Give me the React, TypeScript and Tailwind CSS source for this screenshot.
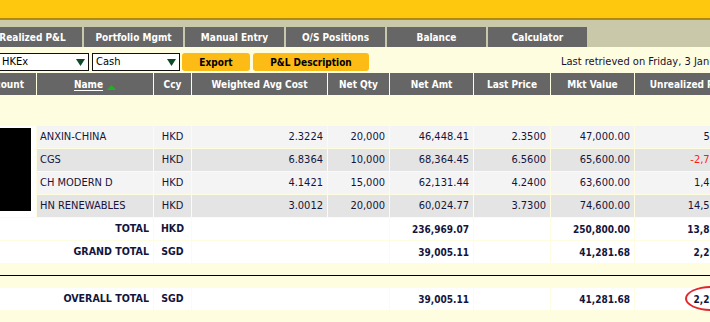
import React from "react";

const COLS =
  "grid grid-cols-[65px_116px_37px_135px_61px_83px_76px_83px_107px] gap-x-px";

const rows = [
  ["ANXIN-CHINA", "HKD", "2.3224", "20,000", "46,448.41", "2.3500", "47,000.00", "551.59"],
  ["CGS", "HKD", "6.8364", "10,000", "68,364.45", "6.5600", "65,600.00", "-2,764.45"],
  ["CH MODERN D", "HKD", "4.1421", "15,000", "62,131.44", "4.2400", "63,600.00", "1,468.56"],
  ["HN RENEWABLES", "HKD", "3.0012", "20,000", "60,024.77", "3.7300", "74,600.00", "14,575.23"],
];

const tabs = ["Realized P&L", "Portfolio Mgmt", "Manual Entry", "O/S Positions", "Balance", "Calculator"];

function Arrow() {
  return (
    <svg width="9" height="7" viewBox="0 0 9 7" className="shrink-0">
      <polygon points="0,0 9,0 4.5,7" fill="#0b4a2a" />
    </svg>
  );
}

function Select({ label, w }: { label: string; w: string }) {
  return (
    <div className={`${w} shrink-0 h-[18px] bg-white border border-[#111] flex items-center pl-[3px] pr-[3px] text-[11px] text-black`}>
      <span className="flex-1">{label}</span>
      <Arrow />
    </div>
  );
}

function TotalRow({ label, ccy, amt, mkt, unr, circle }: { label: string; ccy: string; amt: string; mkt: string; unr: string; circle?: boolean }) {
  const cell = "bg-white h-[22px] flex items-center font-bold text-[#14143c] whitespace-nowrap";
  return (
    <div className={COLS}>
      <div className={`${cell} col-span-2 justify-end pr-[4px] text-[10.6px]`}>{label}</div>
      <div className={`${cell} justify-center text-[10.5px]`}>{ccy}</div>
      <div className={`${cell} col-span-2`}></div>
      <div className={`${cell} justify-end pr-[4px] text-[10px]`}>{amt}</div>
      <div className={cell}></div>
      <div className={`${cell} justify-end pr-[4px] text-[10px]`}>{mkt}</div>
      <div className={`${cell} justify-end pr-[4px] relative text-[10px]`}>
        {unr}
        {circle && (
          <div className="absolute left-[50px] top-[-2px] w-[52px] h-[25px] border-2 border-[#e3262d] rounded-[50%]" />
        )}
      </div>
    </div>
  );
}

export default function App() {
  return (
    <div className="w-[710px] h-[322px] overflow-hidden bg-[#fffde0] font-['DejaVu_Sans_Condensed','DejaVu_Sans',sans-serif] relative">
      <div className="h-[18px] bg-[#fec80f]" />
      <div className="h-[2px] bg-[#b08a10]" />
      <div className="bg-[#c9c9a9] pt-[7px]">
        <div className="flex gap-[2px] ml-[-17px] h-[20px]">
          {tabs.map((t) => (
            <div key={t} className="w-[99px] shrink-0 bg-[#666666] text-white text-[10px] font-bold flex items-center justify-center whitespace-nowrap">
              {t}
            </div>
          ))}
        </div>
      </div>
      <div className="flex items-center h-[18px] mt-[6px] ml-[-2px]">
        <Select label="HKEx" w="w-[91px]" />
        <div className="w-[3px] shrink-0" />
        <Select label="Cash" w="w-[88px]" />
        <div className="shrink-0 ml-[2px] w-[68px] h-[18px] rounded-[3px] bg-[#fdbb16] text-[10px] font-bold text-black flex items-center justify-center">Export</div>
        <div className="shrink-0 ml-[3px] w-[116px] h-[18px] rounded-[3px] bg-[#fdbb16] text-[10px] font-bold text-black flex items-center justify-center">P&amp;L Description</div>
        <div className="shrink-0 ml-[192px] text-[11px] text-[#1a1030] whitespace-nowrap">Last retrieved on Friday, 3 January 2020 4:30 PM</div>
      </div>
      <div className="ml-[-29px] mt-[2px]">
        <div className={COLS}>
          {["Account", "Name", "Ccy", "Weighted Avg Cost", "Net Qty", "Net Amt", "Last Price", "Mkt Value", "Unrealized P&L"].map((h) => (
            <div key={h} className="bg-[#666666] h-[22px] text-white text-[10px] font-bold flex items-center justify-center whitespace-nowrap">
              {h === "Name" ? (
                <span className="flex items-end gap-[4px]">
                  <span className="underline underline-offset-2">Name</span>
                  <svg width="9" height="5" viewBox="0 0 9 5" className="mb-[2px]">
                    <polygon points="0,5 9,5 4.5,0" fill="#22b022" />
                  </svg>
                </span>
              ) : (
                h
              )}
            </div>
          ))}
        </div>
        <div className="h-[31px]" />
        <div className={`${COLS}`}>
          <div className="row-span-4 bg-white pl-[29px] pt-[2px] pb-[6px] mb-px">
            <div className="w-[31px] h-full bg-black" />
          </div>
          {rows.map((r, i) => {
            const bg = i % 2 === 0 ? "bg-[#f4f4f4]" : "bg-[#e4e4e4]";
            const c = `${bg} h-[22px] flex items-center text-[11px] text-[#14143c] mb-px whitespace-nowrap`;
            return (
              <React.Fragment key={r[0]}>
                <div className={`${c} pl-[3px]`}>{r[0]}</div>
                <div className={`${c} justify-center`}>{r[1]}</div>
                {r.slice(2).map((v, j) => (
                  <div key={j} className={`${c} justify-end pr-[4px] ${v.startsWith("-") ? "text-[#ff1a1a]" : ""}`}>
                    {v}
                  </div>
                ))}
              </React.Fragment>
            );
          })}
        </div>
        <div className="flex flex-col gap-px">
          <TotalRow label="TOTAL" ccy="HKD" amt="236,969.07" mkt="250,800.00" unr="13,830.93" />
          <TotalRow label="GRAND TOTAL" ccy="SGD" amt="39,005.11" mkt="41,281.68" unr="2,276.57" />
        </div>
        <div className="h-[12px]" />
        <div className="h-px bg-black ml-[29px]" />
        <div className="h-[12px]" />
        <TotalRow label="OVERALL TOTAL" ccy="SGD" amt="39,005.11" mkt="41,281.68" unr="2,276.57" circle />
      </div>
    </div>
  );
}
